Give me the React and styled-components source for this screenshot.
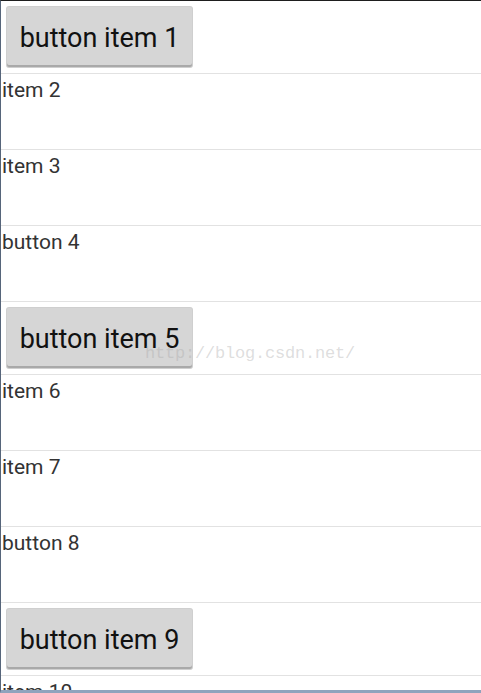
import React from "react";
import styled, { createGlobalStyle } from "styled-components";

const Global = createGlobalStyle`
  html, body { margin: 0; padding: 0; background: #ffffff; }
  body { font-family: Roboto, "Noto Sans", sans-serif; }
`;

const Frame = styled.div`
  position: relative;
  width: 481px;
  height: 693px;
  box-sizing: border-box;
  border-top: 1px solid #1e1e1e;
  border-left: 1px solid #56657a;
  border-bottom: 3px solid #8fa3bd;
  overflow: hidden;
  background: #ffffff;
`;

const List = styled.div`
  display: flex;
  flex-direction: column;
`;

const Row = styled.div`
  display: flex;
  align-items: flex-start;
  box-sizing: border-box;
  height: ${(p) => (p.$button ? 73 : 76)}px;
  padding: ${(p) => (p.$button ? "6px 0 0 6px" : "4px 0 0 1px")};
  border-bottom: 1px solid #e2e2e2;
`;

const Label = styled.span`
  font-family: Roboto, sans-serif;
  font-size: 21px;
  line-height: 24px;
  color: #333333;
`;

const Button = styled.button`
  width: 185px;
  height: 60px;
  box-sizing: border-box;
  margin: 0;
  padding: 2px 0 0;
  border: none;
  border-radius: 2px;
  background: #d6d6d6;
  box-shadow: inset 0 -2px 0 #a9a9a9, 0 0 0 1px #cfcfcf;
  font-family: Roboto, sans-serif;
  font-size: 27px;
  color: #111111;
  text-align: center;
`;

const Watermark = styled.div`
  position: absolute;
  left: 144px;
  top: 343px;
  font-family: "Liberation Mono", monospace;
  font-size: 17px;
  letter-spacing: -0.2px;
  color: rgba(170, 170, 170, 0.4);
  pointer-events: none;
`;

const items = [
  { type: "button", text: "button item 1" },
  { type: "text", text: "item 2" },
  { type: "text", text: "item 3" },
  { type: "text", text: "button 4" },
  { type: "button", text: "button item 5" },
  { type: "text", text: "item 6" },
  { type: "text", text: "item 7" },
  { type: "text", text: "button 8" },
  { type: "button", text: "button item 9" },
  { type: "text", text: "item 10" },
];

export default function App() {
  return (
    <>
      <Global />
      <Frame>
        <List>
          {items.map((it, i) =>
            it.type === "button" ? (
              <Row key={i} $button>
                <Button>{it.text}</Button>
              </Row>
            ) : (
              <Row key={i}>
                <Label>{it.text}</Label>
              </Row>
            )
          )}
        </List>
        <Watermark>http://blog.csdn.net/</Watermark>
      </Frame>
    </>
  );
}
